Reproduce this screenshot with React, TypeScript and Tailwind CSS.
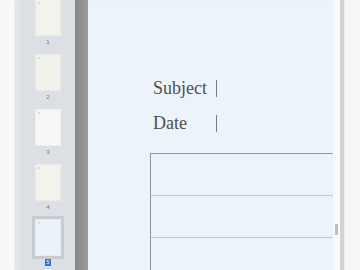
const pages = [
	{ n: 1, bg: "bg-[#f2f3ed]" },
	{ n: 2, bg: "bg-[#f0f2eb]" },
	{ n: 3, bg: "bg-[#f8f6f6]" },
	{ n: 4, bg: "bg-[#f1f3ec]" },
	{ n: 5, bg: "bg-[#ebf2f9]" },
];

const Thumb = ({ n, bg, active }: { n: number; bg: string; active: boolean }) => (
	<div className="flex flex-col items-center">
		<div
			className={`h-[37px] w-[26px] ${bg} border border-dotted border-[#e2e4e0] ${active ? "ring-[3px] ring-[#c8cbcf]" : ""}`}
		>
			<div className="ml-[2px] mt-[2px] h-[2px] w-[2px] bg-[#d8dad6]" />
		</div>
		<div className="h-[18px] pt-[3px]">
			{active ? (
				<div className="flex h-[7px] w-[6px] items-center justify-center bg-[#3a6fd6] text-[5px] leading-[5px] text-white">
					{n}
				</div>
			) : (
				<div className="text-[6px] leading-[6px] text-[#777]">{n}</div>
			)}
		</div>
	</div>
);

const Field = ({ label }: { label: string }) => (
	<div className="flex h-[35px] leading-[24px]">
		<span className="w-[63px]">{label}</span>
		{/* caret / separator */}
		<span className="mt-[4px] h-[17px] w-[1px] bg-[#7c7c7c]" />
	</div>
);

export default function App() {
	return (
		<div className="flex h-[270px] w-[360px] overflow-hidden" style={{ fontFamily: '"Liberation Sans", sans-serif' }}>
			{/* left edge */}
			<div className="w-[15px] bg-[#f8f8f8] border-r border-dotted border-[#ececec]" />
			<div className="w-[5px] bg-[#e5e5e5]" />

			{/* thumbnails */}
			<div className="flex w-[55px] flex-col items-center bg-[#dcdfe3] pl-[1px]">
				<div className="mt-[-1px]" />
				{pages.map((p) => (
					<Thumb key={p.n} n={p.n} bg={p.bg} active={p.n === 5} />
				))}
			</div>
			<div className="w-[13px] bg-gradient-to-r from-[#858585] to-[#9c9c9c]" />

			{/* page */}
			<div className="flex w-[245px] flex-col overflow-hidden bg-[#edf3fa] text-[#4f4f4f]" style={{ fontFamily: '"Liberation Serif", serif' }}>
				<div className="mt-[4px] border-t border-dotted border-[#e3e8ee]" />
				<div className="pl-[65px] pt-[71px] text-[18px]">
					<Field label="Subject" />
					<Field label="Date" />
				</div>
				<div className="ml-[62px] mt-[7px] w-[260px] border-l border-t border-[#959595]">
					<div className="h-[42px] border-b border-[#c3c6ca]" />
					<div className="h-[42px] border-b border-[#c3c6ca]" />
					<div className="h-[42px]" />
				</div>
			</div>

			{/* scrollbar */}
			<div className="flex w-[7px] flex-col bg-[#f9fafc] pl-[2px] pt-[224px]">
				<div className="h-[11px] w-[3px] rounded-[1px] bg-[#b9bdc8]" />
			</div>
			<div className="w-[4px] bg-[#d3d3d3]" />
			<div className="flex-1 bg-[#f6f6f6] border-l border-dotted border-[#e6e6e6]" />
		</div>
	);
}
